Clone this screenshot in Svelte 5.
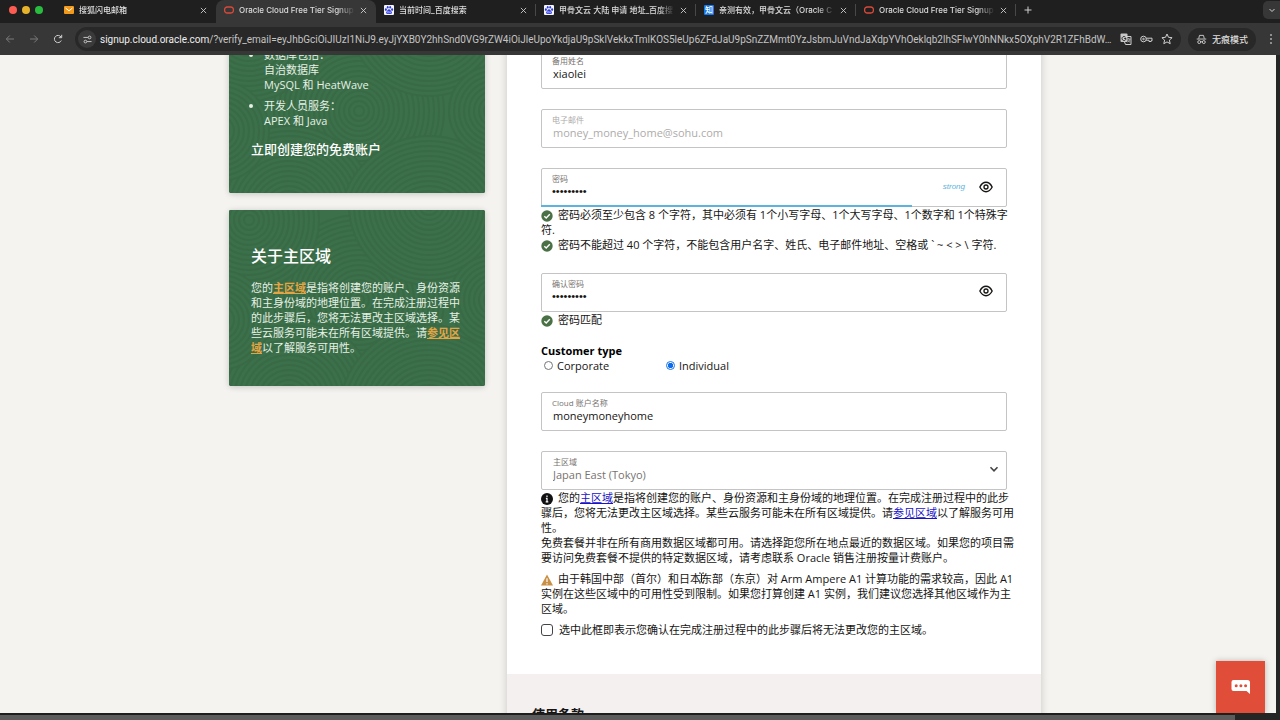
<script lang="ts">
  // Sign-up form page inside a dark browser window.

  interface Tab {
    title: string;
    icon: "mail" | "oracle" | "baidu" | "zhihu";
    active?: boolean;
  }

  const tabs: Tab[] = [
    { title: "搜狐闪电邮箱", icon: "mail" },
    { title: "Oracle Cloud Free Tier Signup", icon: "oracle", active: true },
    { title: "当前时间_百度搜索", icon: "baidu" },
    { title: "甲骨文云 大陆 申请 地址_百度搜", icon: "baidu" },
    { title: "亲测有效，甲骨文云（Oracle C", icon: "zhihu" },
    { title: "Oracle Cloud Free Tier Signup", icon: "oracle" },
  ];

  const host = "signup.cloud.oracle.com";
  const path =
    "/?verify_email=eyJhbGciOiJIUzI1NiJ9.eyJjYXB0Y2hhSnd0VG9rZW4iOiJleUpoYkdjaU9pSklVekkxTmlKOS5leUp6ZFdJaU9pSnZZMmt0YzJsbmJuVndJaXdpYVhOeklqb2lhSFIwY0hNNkx5OXphV2R1ZFhBdW…";

  // centres of the ring groups on the green cards; later ones cover earlier ones
  const rings = [
    { x: 130, y: 90, r: 85 },
    { x: 20, y: 10, r: 70 },
    { x: 200, y: -5, r: 80 },
    { x: 60, y: 190, r: 85 },
    { x: 200, y: 205, r: 90 },
    { x: 265, y: 90, r: 45 },
    { x: -10, y: 110, r: 50 },
  ];

  function radii(r: number): number[] {
    const out: number[] = [];
    for (let v = r; v > 2; v -= 5) out.push(v);
    return out;
  }

  let nickname = $state("xiaolei");
  let password = $state("Abcd1234!");
  let confirm = $state("Abcd1234!");
  let customerType = $state("individual");
  let account = $state("moneymoneyhome");
  let region = $state("tokyo");
  let agreed = $state(false);
  let showPassword = $state(false);
  let showConfirm = $state(false);
  const strength = 80;
</script>

{#snippet favicon(kind: string)}
  {#if kind === "mail"}
    <svg class="favicon" viewBox="0 0 10 10">
      <rect y="1" width="10" height="8" rx="1" fill="#f39a1b" />
      <path d="M1.5 3 5 5.8 8.5 3" fill="none" stroke="#fff" />
    </svg>
  {:else if kind === "oracle"}
    <svg class="favicon" viewBox="0 0 10 10">
      <rect x="0.6" y="2" width="8.8" height="6" rx="2.6" fill="none" stroke="#d8493a" stroke-width="1.3" />
    </svg>
  {:else if kind === "baidu"}
    <svg class="favicon" viewBox="0 0 10 10">
      <rect width="10" height="10" rx="1" fill="#f4f5ff" />
      <g fill="#2b39d8">
        <ellipse cx="1.9" cy="4.6" rx="1" ry="1.3" />
        <ellipse cx="3.7" cy="2.3" rx="0.9" ry="1.3" />
        <ellipse cx="6.2" cy="2.3" rx="0.9" ry="1.3" />
        <ellipse cx="8.1" cy="4.6" rx="1" ry="1.3" />
        <path d="M5 4.3C3.8 4.3 3.5 5.7 2.6 6.5 1.6 7.5 2.2 9.1 3.6 9.1h2.9c1.4 0 2-1.6 1-2.6C6.5 5.7 6.2 4.3 5 4.3z" />
      </g>
      <circle cx="4.1" cy="7.2" r="0.8" fill="none" stroke="#f4f5ff" stroke-width="0.5" />
      <path d="M5.7 6.4v1.4h1.1V6.4" fill="none" stroke="#f4f5ff" stroke-width="0.5" />
    </svg>
  {:else}
    <span class="favicon zhihu">知</span>
  {/if}
{/snippet}

{#snippet ringArt()}
  <svg class="art" viewBox="0 0 256 176" preserveAspectRatio="xMidYMid slice" aria-hidden="true">
    {#each rings as g}
      {#each radii(g.r) as r}
        <circle cx={g.x} cy={g.y} {r} />
      {/each}
    {/each}
  </svg>
{/snippet}

{#snippet check()}
  <svg class="mark" viewBox="0 0 12 12">
    <circle cx="6" cy="6" r="5.7" fill="#4a7145" />
    <path d="M3.3 6.2 5.2 8 8.8 4.2" fill="none" stroke="#fff" stroke-width="1.4" />
  </svg>
{/snippet}

{#snippet eye()}
  <svg viewBox="0 0 16 16" width="14" height="14">
    <path d="M1 8C3 4 5.3 2.6 8 2.6s5 1.4 7 5.4c-2 4-4.3 5.4-7 5.4S3 12 1 8z" fill="none" stroke="#161513" stroke-width="1.6" />
    <circle cx="8" cy="8" r="2.3" fill="none" stroke="#161513" stroke-width="1.5" />
  </svg>
{/snippet}

<div class="browser">
  <div class="tabstrip">
    <div class="lights">
      <span class="red"></span>
      <span class="yellow"></span>
      <span class="green"></span>
    </div>
    {#each tabs as tab}
      <div class="tab" class:active={tab.active}>
        {@render favicon(tab.icon)}
        <span class="title">{tab.title}</span>
        <button class="close" aria-label="关闭标签页">
          <svg viewBox="0 0 8 8" width="7" height="7"><path d="M1 1l6 6M7 1 1 7" /></svg>
        </button>
      </div>
    {/each}
    <button class="newtab" aria-label="新标签页">
      <svg viewBox="0 0 8 8" width="8" height="8"><path d="M4 0.5v7M0.5 4h7" /></svg>
    </button>
    <button class="tabmenu" aria-label="搜索标签页">
      <svg viewBox="0 0 8 8" width="8" height="8"><path d="M1.5 3 4 5.5 6.5 3" /></svg>
    </button>
  </div>

  <div class="toolbar">
    <button class="nav dim" aria-label="后退">
      <svg viewBox="0 0 10 10" width="10" height="10"><path d="M9 5H1.5M4.8 1.5 1.3 5l3.5 3.5" /></svg>
    </button>
    <button class="nav dim" aria-label="前进">
      <svg viewBox="0 0 10 10" width="10" height="10"><path d="M1 5h7.5M5.2 1.5 8.7 5 5.2 8.5" /></svg>
    </button>
    <button class="nav" aria-label="重新加载">
      <svg viewBox="0 0 10 10" width="10" height="10"><path d="M8.3 6.5A3.6 3.6 0 1 1 8 3M8.7 0.8v2.9H5.8" /></svg>
    </button>
    <div class="omnibox">
      <button class="site" aria-label="网站信息">
        <svg viewBox="0 0 10 10" width="9" height="9">
          <path d="M0.5 2.7h5M4.5 7.3h5" />
          <circle cx="7.3" cy="2.7" r="1.5" />
          <circle cx="2.7" cy="7.3" r="1.5" />
        </svg>
      </button>
      <span class="url"><b>{host}</b>{path}</span>
      <svg viewBox="0 0 12 12" width="12" height="12">
        <rect x="0.5" y="0.5" width="7" height="8.5" rx="1" fill="#c7c7c7" stroke="none" />
        <path d="M5.5 3.5h5.5v8H5.5L4.5 9" />
        <path d="M5.5 4.2A2 2 0 1 0 6 5.5H4.2" stroke="#282828" />
        <path d="M7 6h3.5M8.7 5v1M10 6c-.3 1.5-1.2 2.5-2.5 3M7.8 7.2c.5.9 1.2 1.5 2.2 2" stroke-width="0.7" />
      </svg>
      <svg viewBox="0 0 13 10" width="13" height="10">
        <circle cx="3.5" cy="5" r="2.8" />
        <circle cx="3.5" cy="5" r="0.8" />
        <path d="M6.3 4.2h5.7v2.6h-1v.7H9v-1.3H6.2" />
      </svg>
      <svg viewBox="0 0 12 12" width="12" height="12">
        <path d="M6 1l1.5 3.3 3.6.4-2.7 2.4.8 3.6L6 8.9l-3.2 1.8.8-3.6L.9 4.7l3.6-.4z" />
      </svg>
    </div>
    <button class="incognito">
      <svg viewBox="0 0 12 12" width="11" height="11">
        <path d="M3 5 3.8 1.5h4.4L9 5M0.8 5.5h10.4" />
        <circle cx="3.5" cy="8.8" r="1.6" />
        <circle cx="8.5" cy="8.8" r="1.6" />
        <path d="M5 8.5h2" />
      </svg>
      无痕模式
    </button>
    <button class="more" aria-label="更多">
      <svg viewBox="0 0 4 12" width="4" height="12">
        <circle cx="2" cy="2" r="0.5" /><circle cx="2" cy="6" r="0.5" /><circle cx="2" cy="10" r="0.5" />
      </svg>
    </button>
  </div>

  <main class="page">
    <div class="content">
      <aside>
        <section class="card offer">
          {@render ringArt()}
          <ul>
            <li>数据库包括：<br />自治数据库<br />MySQL 和 HeatWave</li>
            <li>开发人员服务：<br />APEX 和 Java</li>
          </ul>
          <h3>立即创建您的免费账户</h3>
        </section>
        <section class="card region">
          {@render ringArt()}
          <h2>关于主区域</h2>
          <p>
            您的<a href="#region">主区域</a>是指将创建您的账户、身份资源<br />和主身份域的地理位置。在完成注册过程中<br />的此步骤后，您将无法更改主区域选择。某<br />些云服务可能未在所有区域提供。请<a href="#services">参见区<br />域</a>以了解服务可用性。
          </p>
        </section>
      </aside>

      <form class="sheet">
        <div class="fields">
          <div class="field">
            <label for="nickname">备用姓名</label>
            <input id="nickname" type="text" bind:value={nickname} />
          </div>

          <div class="field disabled">
            <label for="email">电子邮件</label>
            <input id="email" type="email" value="money_money_home@sohu.com" disabled />
          </div>

          <div class="group">
            <div class="field">
              <label for="password">密码</label>
              <input id="password" type={showPassword ? "text" : "password"} bind:value={password} />
              <div class="tools">
                <span class="strength">strong</span>
                <button type="button" aria-label="显示密码" onclick={() => (showPassword = !showPassword)}>
                  {@render eye()}
                </button>
              </div>
              <div class="meter" style="width: {strength}%"></div>
            </div>
            <p class="hint">
              {@render check()}密码必须至少包含 8 个字符，其中必须有 1个小写字母、1个大写字母、1个数字和 1个特殊字<br />符.
            </p>
            <p class="hint">
              {@render check()}密码不能超过 40 个字符，不能包含用户名字、姓氏、电子邮件地址、空格或 ` ~ &lt; &gt; \ 字符.
            </p>
          </div>

          <div>
            <div class="field">
              <label for="confirm">确认密码</label>
              <input id="confirm" type={showConfirm ? "text" : "password"} bind:value={confirm} />
              <div class="tools">
                <button type="button" aria-label="显示密码" onclick={() => (showConfirm = !showConfirm)}>
                  {@render eye()}
                </button>
              </div>
            </div>
            <p class="hint">{@render check()}密码匹配</p>
          </div>

          <fieldset>
            <legend>Customer type</legend>
            <div class="radios">
              <label><input type="radio" name="type" value="corporate" bind:group={customerType} />Corporate</label>
              <label><input type="radio" name="type" value="individual" bind:group={customerType} />Individual</label>
            </div>
          </fieldset>

          <div class="field">
            <label for="account">Cloud 账户名称</label>
            <input id="account" type="text" bind:value={account} />
          </div>

          <div>
            <div class="field select">
              <label for="region">主区域</label>
              <select id="region" bind:value={region}>
                <option value="tokyo">Japan East (Tokyo)</option>
                <option value="osaka">Japan Central (Osaka)</option>
              </select>
              <svg class="arrow" viewBox="0 0 10 10" width="10" height="10"><path d="M1.5 3.3 5 6.8 8.5 3.3" /></svg>
            </div>
            <p class="hint">
              <svg class="mark" viewBox="0 0 12 12">
                <circle cx="6" cy="6" r="6" fill="#111" />
                <path d="M6 2.5v1.5M4.9 5.3H6v3.5M4.7 8.9h2.6" fill="none" stroke="#fff" stroke-width="1.2" />
              </svg>您的<a href="#region">主区域</a>是指将创建您的账户、身份资源和主身份域的地理位置。在完成注册过程中的此步<br />骤后，您将无法更改主区域选择。某些云服务可能未在所有区域提供。请<a href="#services">参见区域</a>以了解服务可用<br />性。<br />
              免费套餐并非在所有商用数据区域都可用。请选择距您所在地点最近的数据区域。如果您的项目需<br />要访问免费套餐不提供的特定数据区域，请考虑联系 Oracle 销售注册按量计费账户。
            </p>
            <p class="hint spaced">
              <svg class="mark" viewBox="0 0 12 12">
                <path d="M6 0.5 12 11.5H0z" fill="#c98f43" />
                <path d="M6 4.3v3.8M6 9.2v1.3" stroke="#fff" stroke-width="1.2" />
              </svg>由于韩国中部（首尔）和日本东部（东京）对 Arm Ampere A1 计算功能的需求较高，因此 A1<br />实例在这些区域中的可用性受到限制。如果您打算创建 A1 实例，我们建议您选择其他区域作为主<br />区域。
            </p>
            <label class="agree">
              <input type="checkbox" bind:checked={agreed} />选中此框即表示您确认在完成注册过程中的此步骤后将无法更改您的主区域。
            </label>
          </div>
        </div>
        <section class="terms">
          <h3>使用条款</h3>
        </section>
      </form>
    </div>

    <svg class="cursor" viewBox="0 0 7 12" width="7" height="12">
      <path d="M1 1q2 0 2.5 1Q4 1 6 1M3.5 2v8M1 11q2 0 2.5-1 .5 1 2.5 1M2.5 7h2" />
    </svg>

    <button class="chat" aria-label="聊天">
      <svg viewBox="0 0 20 16" width="20" height="16">
        <path d="M2.500 1h14A2.500 2.500 0 0 1 19 3.500V15l-3.500-3h-13A2 2 0 0 1 0.500 10V3a2 2 0 0 1 2-2z" fill="#fff" />
        <g fill="#e04e3a"><circle cx="5.2" cy="6.7" r="1.5" /><circle cx="9.9" cy="6.7" r="1.5" /><circle cx="14.6" cy="6.7" r="1.5" /></g>
      </svg>
    </button>
  </main>
  <div class="shelf"></div>
</div>

<style>
  :global(body) {
    margin: 0;
  }
  .browser {
    display: flex;
    flex-direction: column;
    height: 100vh;
    overflow: hidden;
    background: #252525;
    color: #161513;
    font-family: "Open Sans", "Noto Sans CJK SC", sans-serif;
    font-size: 11px;
    line-height: 15px;
  }
  button {
    padding: 0;
    border: 0;
    background: none;
    color: inherit;
    font: inherit;
  }
  h2,
  h3,
  p,
  ul {
    margin: 0;
    padding: 0;
  }

  /* browser frame */
  .tabstrip {
    display: flex;
    height: 23px;
    background: #1f1f1f;
    color: #dcdcdc;
    font-family: Inter, "Noto Sans CJK SC", sans-serif;
    font-size: 8px;
    font-weight: 500;
  }
  .tabstrip button svg,
  .toolbar svg {
    fill: none;
    stroke: #d0d0d0;
  }
  .lights {
    display: flex;
    flex: none;
    gap: 5px;
    width: 47px;
    padding: 6px 0 0 9px;
  }
  .lights span {
    width: 8px;
    height: 8px;
    border-radius: 50%;
  }
  .red {
    background: #fe5b52;
  }
  .yellow {
    background: #e6b42c;
  }
  .green {
    background: #29bd3f;
  }
  .tab {
    display: flex;
    flex: 0 1 160px;
    box-sizing: border-box;
    min-width: 0;
    height: 20px;
    align-items: center;
    gap: 5px;
    padding: 0 8px;
    border-right: 1px solid transparent;
  }
  .tab:nth-child(n + 4) {
    border-image: linear-gradient(transparent 25%, #484848 25% 75%, transparent 75%) 1;
    border-width: 0 1px 0 0;
    border-style: solid;
  }
  .tab.active {
    height: 23px;
    padding-bottom: 3px;
    border-radius: 8px 8px 0 0;
    background: #373737;
  }
  .favicon {
    flex: none;
    width: 10px;
    height: 10px;
  }
  .zhihu {
    border-radius: 1px;
    background: #1677e8;
    color: #fff;
    line-height: 10px;
    text-align: center;
  }
  .title {
    flex: 1;
    overflow: hidden;
    white-space: nowrap;
    mask-image: linear-gradient(to right, #000 85%, transparent);
  }
  .close,
  .newtab {
    display: flex;
    align-items: center;
  }
  .newtab {
    height: 20px;
    margin-left: 8px;
  }
  .tabmenu {
    display: grid;
    place-items: center;
    width: 17px;
    height: 18px;
    margin: 1px 0 0 auto;
    border-radius: 5px 0 0 5px;
    background: #373737;
  }
  .toolbar {
    display: flex;
    align-items: center;
    height: 32px;
    padding: 0 7px 0 5px;
    background: #373737;
    color: #dcdcdc;
  }
  .nav {
    display: grid;
    place-items: center;
    width: 10px;
    margin-right: 14px;
  }
  .dim svg {
    stroke: #7a7a7a;
  }
  .omnibox {
    display: flex;
    flex: 1;
    min-width: 0;
    align-items: center;
    gap: 8px;
    box-sizing: border-box;
    height: 24px;
    margin-left: -2px;
    padding: 0 8px 0 3px;
    border-radius: 12px;
    background: #282828;
  }
  .omnibox > svg {
    flex: none;
  }
  .site {
    display: grid;
    flex: none;
    place-items: center;
    width: 18px;
    height: 18px;
    margin-right: -4px;
    border-radius: 50%;
    background: #3a3a3a;
  }
  .url {
    flex: 1;
    overflow: hidden;
    color: #c4c4c4;
    font-family: Roboto, sans-serif;
    font-size: 10px;
    white-space: nowrap;
  }
  .url b {
    color: #eee;
    font-weight: 400;
  }
  .incognito {
    display: flex;
    align-items: center;
    gap: 5px;
    height: 23px;
    margin: 0 13px 0 7px;
    padding: 0 8px;
    border-radius: 12px;
    background: #282828;
    font-family: "Noto Sans CJK SC", sans-serif;
    font-size: 9px;
    font-weight: 500;
  }
  .more svg {
    display: block;
  }

  /* page */
  .page {
    position: relative;
    flex: 1;
    min-height: 0;
    margin-right: 4px;
    padding-right: 6px;
    overflow: hidden;
    background: #f5f3f0;
  }
  .content {
    display: flex;
    gap: 22px;
    max-width: 812px;
    margin: -30px auto 0;
  }
  aside {
    display: flex;
    flex: 0 0 256px;
    flex-direction: column;
    gap: 17px;
  }
  .card {
    position: relative;
    padding: 22px 22px 36px;
    border-radius: 3px;
    background: #3b704a;
    box-shadow: 0 1px 6px rgba(0, 0, 0, 0.2);
    color: #e6f0e5;
    white-space: nowrap;
  }
  .card.region {
    padding: 36px 22px 31px;
  }
  .card > :not(.art) {
    position: relative;
  }
  .art {
    position: absolute;
    inset: 0;
    width: 100%;
    height: 100%;
    border-radius: 3px;
  }
  .art circle {
    fill: #3b704a;
    stroke: #386a46;
    stroke-width: 2;
  }
  .card ul {
    padding-left: 13px;
  }
  .card li {
    margin-bottom: 6px;
  }
  .card h3 {
    margin-top: 13px;
    color: #fff;
    font-size: 13px;
    font-weight: 500;
    line-height: 16px;
  }
  .card h2 {
    margin-bottom: 14px;
    color: #fff;
    font-size: 16px;
    font-weight: 500;
    line-height: 20px;
  }
  .card a {
    color: #e5a443;
    font-weight: 700;
  }
  .sheet {
    flex: 1;
    min-width: 0;
    background: #fff;
    box-shadow: 0 0 8px rgba(0, 0, 0, 0.18);
  }
  .fields {
    display: flex;
    flex-direction: column;
    gap: 20px;
    padding: 25px 34px 37px;
  }
  .group {
    padding-bottom: 1px;
  }
  .field {
    position: relative;
    display: flex;
    flex-direction: column;
    box-sizing: border-box;
    height: 39px;
    padding: 5px 10px;
    border: 1px solid #c4c4c4;
    border-radius: 2px;
  }
  .field label {
    color: #77736f;
    font-size: 8px;
    line-height: 10px;
  }
  .field input,
  .field select {
    height: 15px;
    padding: 0 1px;
    border: 0;
    outline: 0;
    appearance: none;
    background: none;
    color: #161513;
    font: inherit;
  }
  .field input[type="password"] {
    padding: 0;
    font-family: "Liberation Sans", sans-serif;
  }
  .field.disabled label,
  .field.disabled input {
    color: #adaba9;
  }
  .field.select select {
    color: #77736f;
  }
  .field.select label {
    padding-left: 1px;
  }
  .arrow {
    position: absolute;
    top: 12px;
    right: 7px;
    fill: none;
    stroke: #444;
    stroke-width: 1.6;
    pointer-events: none;
  }
  .tools {
    position: absolute;
    top: 10px;
    right: 13px;
    display: flex;
    align-items: center;
    gap: 14px;
  }
  .tools button,
  .tools svg {
    display: block;
  }
  .strength {
    color: #5cb3de;
    font-family: "Liberation Sans", sans-serif;
    font-size: 8px;
    font-style: italic;
  }
  .meter {
    position: absolute;
    bottom: -1px;
    left: -1px;
    height: 2px;
    background: #5cb3de;
  }
  .hint {
    white-space: nowrap;
  }
  .hint a {
    color: #1a12c9;
  }
  .spaced {
    margin: 6px 0;
  }
  .mark {
    width: 12px;
    height: 12px;
    margin-right: 5px;
    vertical-align: -3px;
  }
  fieldset {
    margin: -4px 0 0;
    padding: 0;
    border: 0;
  }
  legend {
    padding: 0;
    color: #000;
    font-weight: 700;
    line-height: 15px;
  }
  .radios {
    display: flex;
    height: 14px;
  }
  .radios label {
    display: flex;
    flex: 0 0 122px;
    align-items: center;
    gap: 4px;
    padding-left: 3px;
    box-sizing: border-box;
  }
  .radios input,
  .agree input {
    flex: none;
    box-sizing: border-box;
    width: 9px;
    height: 9px;
    margin: 0;
    border: 1px solid #767676;
    border-radius: 50%;
    appearance: none;
  }
  .radios input:checked {
    border-color: #1a73e8;
    background: radial-gradient(#0b6cf0 50%, #fff 60%);
  }
  .agree {
    display: flex;
    align-items: center;
    gap: 6px;
    white-space: nowrap;
  }
  .agree input {
    width: 12px;
    height: 12px;
    border-color: #444;
    border-radius: 3px;
  }
  .agree input:checked {
    background: #1a73e8;
  }
  .terms {
    padding: 31px 25px;
    background: #f3f0ef;
  }
  .terms h3 {
    font-size: 13px;
    line-height: 18px;
  }
  .cursor {
    position: absolute;
    top: 517px;
    left: calc(50% + 60px);
    fill: none;
    stroke: #222;
  }
  .chat {
    position: absolute;
    right: 11px;
    bottom: 0;
    display: grid;
    place-items: center;
    width: 49px;
    height: 52px;
    background: #e04e3a;
    box-shadow: 0 0 6px rgba(0, 0, 0, 0.25);
  }
  .shelf {
    flex: none;
    height: 5px;
    margin-right: 45px;
    border-top: 2px solid #1e1e1e;
    border-radius: 0 2px 0 0;
    background: #5c5c5c;
  }
</style>
